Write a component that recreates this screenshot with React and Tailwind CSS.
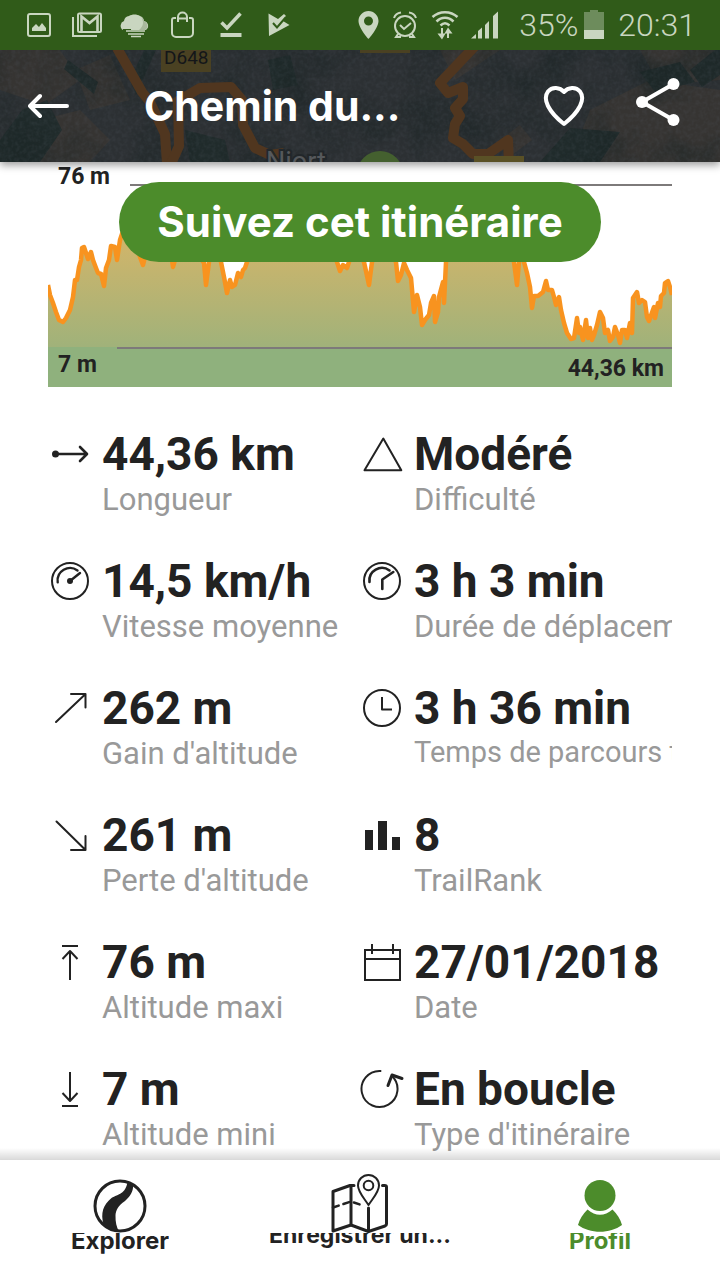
import React from 'react';

const profile = [
  [0, 123], [2, 133], [5, 141], [8, 150], [11, 158], [15, 160], [18, 156], [22, 148], [25, 135], [27, 118],
  [29, 118], [31, 105], [33, 98], [34, 86], [36, 85], [38, 91], [40, 97], [43, 90], [45, 98], [48, 106],
  [50, 111], [53, 112], [56, 124], [58, 106], [61, 98], [63, 84], [67, 85], [69, 98], [72, 78], [78, 60],
  [86, 72], [92, 95], [95, 103], [97, 95], [105, 78], [116, 74], [124, 98], [125, 105], [127, 98], [139, 78],
  [156, 101], [158, 123], [161, 100], [165, 81], [173, 100], [176, 115], [179, 131], [182, 118], [184, 125],
  [187, 123], [190, 111], [193, 115], [195, 108], [197, 106], [199, 100], [202, 81], [220, 50], [245, 62],
  [262, 45], [280, 75], [289, 100], [292, 109], [295, 103], [299, 106], [301, 100], [305, 85], [316, 100],
  [321, 123], [324, 100], [335, 78], [348, 100], [350, 119], [353, 113], [356, 101], [359, 108], [363, 116],
  [366, 150], [369, 133], [372, 145], [374, 163], [377, 158], [381, 153], [383, 141], [386, 134], [387, 160],
  [390, 150], [391, 135], [395, 120], [396, 141], [398, 100], [402, 78], [420, 40], [445, 55], [466, 100],
  [469, 123], [471, 100], [474, 88], [476, 100], [479, 111], [482, 125], [484, 146], [486, 134], [490, 134],
  [495, 130], [498, 119], [500, 128], [504, 128], [506, 135], [508, 143], [511, 135], [513, 148], [516, 161],
  [519, 171], [523, 177], [526, 176], [529, 156], [531, 171], [532, 165], [535, 178], [538, 158], [540, 176],
  [542, 166], [544, 178], [546, 173], [549, 163], [552, 150], [555, 156], [557, 171], [560, 168], [562, 179],
  [565, 175], [567, 165], [570, 173], [572, 181], [574, 168], [577, 168], [579, 176], [582, 161], [584, 171],
  [585, 136], [589, 130], [591, 141], [594, 138], [597, 140], [599, 155], [601, 159], [606, 145], [607, 156],
  [610, 141], [612, 145], [613, 134], [616, 131], [617, 121], [620, 119], [622, 125], [624, 133],
];

const linePoints = profile.map((p) => p.join(',')).join(' ');

const icons = {
  length: (
    <>
      <circle cx="7.5" cy="22" r="3.5" fill="currentColor" stroke="none" />
      <path d="M8 22h30M32 15l7 7-7 7" strokeWidth="2.6" />
    </>
  ),
  difficulty: <path d="M23.3 6.5 4.5 38.3h36.8Z" />,
  speed: (
    <>
      <circle cx="22" cy="22" r="18" />
      <circle cx="22" cy="22" r="3" fill="currentColor" stroke="none" />
      <path d="M9.7 23.3A12.5 12.5 0 0 1 29.5 11.5M22 22l10-8" strokeWidth="2.4" />
    </>
  ),
  moving: (
    <>
      <circle cx="22" cy="22" r="18" />
      <path d="M9.5 23A12.5 12.5 0 0 1 29.5 11.5M22.3 30v-9.5l11-7.5" strokeWidth="2.6" />
    </>
  ),
  gain: <path d="M8 36 37 8.5M23 8h14.5v13.5" />,
  loss: <path d="M8.5 8.5 37 36.5M23 37h14.5V23" />,
  clock: (
    <>
      <circle cx="22" cy="22" r="18" />
      <path d="M22 11v12.5h10" strokeLinecap="butt" />
    </>
  ),
  rank: <path d="M5 17h8v20H5zM18 8h9v29h-9zM32 24h8v13h-8z" fill="currentColor" stroke="none" />,
  max: <path d="M14 6h16M22 40V11M14.5 19l7.5-8 7.5 8" strokeLinecap="butt" />,
  min: <path d="M14 39h16M22 5v29M14.5 26l7.5 8 7.5-8" strokeLinecap="butt" />,
  date: <path d="M5 10h35v30H5zM5 19h35M12 4v10M33 4v10" strokeLinejoin="miter" strokeLinecap="butt" />,
  loop: (
    <>
      <path d="M20.5 4A18 18 0 1 0 32 9" />
      <path d="M28 18.5 32 8l10 3.5" strokeWidth="3" />
    </>
  ),
};

const stats = [
  { icon: 'length', value: '44,36 km', label: 'Longueur' },
  { icon: 'difficulty', value: 'Modéré', label: 'Difficulté' },
  { icon: 'speed', value: '14,5 km/h', label: 'Vitesse moyenne' },
  { icon: 'moving', value: '3 h 3 min', label: 'Durée de déplacement' },
  { icon: 'gain', value: '262 m', label: "Gain d'altitude" },
  { icon: 'clock', value: '3 h 36 min', label: 'Temps de parcours total', small: true },
  { icon: 'loss', value: '261 m', label: "Perte d'altitude" },
  { icon: 'rank', value: '8', label: 'TrailRank' },
  { icon: 'max', value: '76 m', label: 'Altitude maxi' },
  { icon: 'date', value: '27/01/2018', label: 'Date' },
  { icon: 'min', value: '7 m', label: 'Altitude mini' },
  { icon: 'loop', value: 'En boucle', label: "Type d'itinéraire" },
];

const StatusBar = () => (
  <div className="relative z-20 flex h-[50px] items-center justify-between bg-[#305b19] pl-[15px] pr-6 text-[#c9d6c0]">
    <div className="flex">
      {/* gallery */}
      <svg className="h-[30px] w-12" viewBox="0 0 48 30" fill="none" stroke="currentColor" strokeWidth="2">
        <rect x="13" y="4" width="22" height="22" rx="2" />
        <path d="M17 21v-3l4-4 3 3 3-4 4 5v3z" fill="currentColor" stroke="none" />
      </svg>
      {/* mail */}
      <svg className="h-[30px] w-12" viewBox="0 0 48 30" fill="none" stroke="currentColor" strokeWidth="2">
        <path d="M10 7v19h24" />
        <rect x="15" y="3.5" width="23" height="18.5" rx="1.5" />
        <path d="M18.5 22V6.5l8 6.5 8-6.5V22" strokeWidth="2.6" />
      </svg>
      {/* weather */}
      <svg className="h-[30px] w-12" viewBox="0 0 48 30" fill="currentColor">
        <path d="M12 20a5 5 0 0 1 1-9 6 6 0 0 1 5-5c3-2 8-2 11 0a6 6 0 0 1 4 5 5 5 0 0 1 2 9z" />
        <path d="M30 7c3 4 3 9-2 13h6a5 5 0 0 0-1-9 6 6 0 0 0-3-4z" fill="#a9b89d" />
        <path d="M12 19.5h8M15 22.5h18" stroke="#305b19" strokeWidth="1" />
        <path d="M15 21h19M17 24h16M20 26.5h10" stroke="currentColor" strokeWidth="1.3" />
      </svg>
      {/* shopping bag */}
      <svg className="h-[30px] w-12" viewBox="0 0 48 30" fill="none" stroke="currentColor" strokeWidth="2">
        <path d="M17 8h-2a2 2 0 0 0-2 2v13a4 4 0 0 0 4 4h13a4 4 0 0 0 4-4V10a2 2 0 0 0-2-2h-2" />
        <path d="M19 12V7c0-6 9-6 9 0v5M19 8.5h9" />
      </svg>
      {/* download done */}
      <svg className="h-[30px] w-12" viewBox="0 0 48 30" fill="none" stroke="currentColor">
        <path d="m14.5 12.5 5.5 5.5L33.5 3.5" strokeWidth="3.5" />
        <path d="M13.5 25h21" strokeWidth="4" />
      </svg>
      {/* play store */}
      <svg className="h-[30px] w-12" viewBox="0 0 48 30">
        <path d="M13.5 3.5 23 9l6-5 2 2-3 5 6.5 4L14 26z" fill="currentColor" />
        <path d="m18 13 4 4.5L31 7" fill="none" stroke="#305b19" strokeWidth="2" />
      </svg>
    </div>
    <div className="flex items-center">
      {/* location */}
      <svg className="mr-3 h-[30px] w-[22px]" viewBox="0 0 22 30" fill="currentColor" fillRule="evenodd">
        <path d="M10.500 1C5 1 .5 5.500.5 11c0 7 10 18 10 18s10-11 10-18c0-5.500-4.500-10-10-10zm0 5.500a4.500 4.500 0 1 1 0 9 4.500 4.500 0 0 1 0-9z" />
      </svg>
      {/* alarm */}
      <svg className="mr-[13px] h-[30px] w-[26px]" viewBox="0 0 26 30" fill="none" stroke="currentColor" strokeWidth="2">
        <circle cx="13" cy="16" r="10" />
        <path d="m8 15 4 4 7-6M2 8c1-3 4-5 7-5.500M24 8c-1-3-4-5-7-5.500M6 24l-2 3h5M20 24l2 3h-5" />
      </svg>
      {/* wifi */}
      <svg className="mr-3 h-[30px] w-7" viewBox="0 0 28 30" fill="none" stroke="currentColor" strokeWidth="2.5">
        <path d="M1.5 7c7-6.5 18-6.5 25 0M5.5 11.5c5-5 12-5 17 0M9.5 15.5c3-3 6-3 9 0" />
        <path d="M11 18v7M17 28v-7" strokeWidth="2" />
        <path d="M6.5 23.5h8L11 29.5zM13.5 23.5h8L17 17.5z" fill="currentColor" stroke="none" />
      </svg>
      {/* signal */}
      <svg className="mr-5 h-[30px] w-7" viewBox="0 0 28 30" fill="currentColor">
        <path d="M0 28.5 5 24v4.5zM7 21l4-3.5v11H7zM14 15l4-4v17.5h-4zM22 6l5-4.5v27h-5z" />
      </svg>
      <span className="font-[Roboto,sans-serif] text-[32px] font-light leading-[50px]">35%</span>
      {/* battery */}
      <svg className="ml-[6px] mr-[14px] h-[30px] w-5" viewBox="0 0 20 30">
        <path d="M0 2h6V0h8v2h6v18H0z" fill="#6d8c5c" />
        <path d="M0 20h20v9H0z" fill="currentColor" />
      </svg>
      <span className="font-[Roboto,sans-serif] text-[32px] font-light leading-[50px]">20:31</span>
    </div>
  </div>
);

const MapBackdrop = () => (
  <svg
    className="absolute inset-0 h-full w-full"
    viewBox="0 0 720 112"
    preserveAspectRatio="xMidYMid slice"
    aria-hidden="true"
  >
    <defs>
      <filter id="grain" x="0" y="0" width="100%" height="100%" colorInterpolationFilters="sRGB">
        <feTurbulence type="fractalNoise" baseFrequency="0.25" numOctaves="3" seed="4" />
        <feColorMatrix values="0 0 0 0 .35  0 0 0 0 .38  0 0 0 0 .42  .9 0 0 0 -.33" />
      </filter>
      <filter id="patches" x="0" y="0" width="100%" height="100%" colorInterpolationFilters="sRGB">
        <feTurbulence type="fractalNoise" baseFrequency="0.022" numOctaves="3" seed="9" />
        <feColorMatrix values="0 0 0 0 .1  0 0 0 0 .14  0 0 0 0 .14  0 2.5 0 0 -1" />
      </filter>
    </defs>
    <rect width="720" height="112" fill="#2c3033" />
    <g fill="#363432">
      <path d="M0 0h60l20 30-35 25L0 40zM75 20l35-15 20 45-40 10zM20 75l60-15 30 30-20 22H30z" />
      <path d="M440 0h60l-45 30zM590 60l60-30 70 10v72H570zM640 0h80v30l-60 5zM500 90l20-15 12 15-20 15z" />
    </g>
    <g fill="#202b2b">
      <path d="m68 10 30 22-4 12-30-25zM22 60l25-10 15 30-22 32H0V90zM130 30l14-30h12l-20 45zM185 80l40 10 5 22h-40z" />
      <path d="m690 20 25-20h5v25l-18 12zM640 22l40-10 15 20-40 10zM570 78l50 4-20 30h-60zM268 10l22-5 8 30-25 5z" />
    </g>
    <rect width="720" height="112" filter="url(#patches)" opacity="0.5" />
    <rect width="720" height="112" filter="url(#grain)" opacity="0.4" />
    <g fill="none" stroke="#50361f" strokeWidth="10" strokeLinejoin="round">
      <path d="m117-2 25 44 8 10 15 32 2 30" />
      <path d="m171 114 8-18-1-45 22-13 31-1 11 13 1 25 12 23 15 7 14-2" />
      <path d="m475-4-35 37 8 10 15-6v12l-8 9 5 8-5 8-2 14 10 6 10 10h15l20-14 1 26" />
    </g>
    <rect x="161" width="50" height="22" fill="#4a4122" />
    <text x="164" y="14" fill="#141619" fontSize="19" fontFamily="Roboto, sans-serif">D648</text>
    <rect x="360" width="50" height="3" fill="#4a4122" />
    <rect x="474" y="106" width="50" height="7" fill="#5a5126" />
    <circle cx="380" cy="124" r="23" fill="#44602f" />
    <text
      x="266"
      y="121"
      fill="#55585b"
      stroke="#22272a"
      strokeWidth="4"
      paintOrder="stroke"
      fontSize="27"
      fontFamily="Roboto, sans-serif"
    >
      Niort
    </text>
  </svg>
);

const Header = () => (
  <header className="relative z-10 h-28 shadow-[0_3px_8px_rgba(0,0,0,0.4)]">
    <MapBackdrop />
    <div className="relative flex h-full items-center pl-7 pr-[39px] text-white">
      <button type="button" aria-label="Retour">
        <svg className="h-7 w-[42px]" viewBox="0 0 42 28" fill="none" stroke="currentColor" strokeWidth="4" strokeLinecap="round" strokeLinejoin="round">
          <path d="M39 14H2M12 4 2 14l10 10" />
        </svg>
      </button>
      <h1 className="ml-[74px] min-w-0 flex-1 truncate font-[Inter,sans-serif] text-[41px] font-bold leading-[56px]">
        Chemin du...
      </h1>
      <button type="button" aria-label="Ajouter aux favoris">
        <svg className="h-[42px] w-[42px]" viewBox="0 0 42 42" fill="none" stroke="currentColor" strokeWidth="4" strokeLinejoin="round">
          <path d="M21 7C17 2 9 1.500 5 6.500c-3 4-2.500 9.500 0 14.500 3.500 7 9 12.500 16 18 7-5.500 12.500-11 16-18 2.500-5 3-10.500 0-14.500C33 1.500 25 2 21 7z" />
        </svg>
      </button>
      <button type="button" aria-label="Partager" className="ml-[50px]">
        <svg className="h-[58px] w-[46px]" viewBox="0 0 46 58" fill="currentColor" stroke="currentColor">
          <path d="M38.5 7 7 25l31.5 18" fill="none" strokeWidth="4" />
          <circle cx="38.5" cy="7" r="6" stroke="none" />
          <circle cx="7" cy="25" r="6" stroke="none" />
          <circle cx="38.5" cy="43" r="6" stroke="none" />
        </svg>
      </button>
    </div>
  </header>
);

const ElevationChart = () => (
  <section className="relative px-12 font-[Roboto,sans-serif] text-[23px] font-bold leading-7 text-[#222]">
    <div className="relative">
      <svg className="block h-[225px] w-full" viewBox="0 0 624 225" preserveAspectRatio="none" aria-hidden="true">
        <defs>
          <linearGradient id="slope" gradientUnits="userSpaceOnUse" x1="0" y1="70" x2="0" y2="185">
            <stop offset="0" stopColor="#d4b569" />
            <stop offset="1" stopColor="#a0b27a" />
          </linearGradient>
        </defs>
        <polygon points={`0,185 ${linePoints} 624,185`} fill="url(#slope)" />
        <rect y="185" width="624" height="40" fill="#8fb17d" />
        <path d="M82 23h542M69 186h555" stroke="#7d7a7a" strokeWidth="2" />
        <polyline points={linePoints} fill="none" stroke="#f8931f" strokeWidth="4.5" strokeLinejoin="round" />
      </svg>
      <span className="absolute left-[10px] top-px">76 m</span>
      <span className="absolute bottom-2 left-[10px]">7 m</span>
      <span className="absolute bottom-1 right-2">44,36 km</span>
    </div>
    <div className="absolute inset-x-0 top-5 flex justify-center">
      <button
        type="button"
        className="h-20 rounded-full bg-[#4c8c2b] px-[38px] font-[Inter,sans-serif] text-[42px] font-bold text-white"
      >
        Suivez cet itinéraire
      </button>
    </div>
  </section>
);

const Stat = ({ icon, value, label, small }) => (
  <div className="flex min-w-0 gap-[10px]">
    <svg
      className="mt-[6px] h-11 w-11 shrink-0"
      viewBox="0 0 44 44"
      fill="none"
      stroke="currentColor"
      strokeWidth="2"
      strokeLinecap="round"
      strokeLinejoin="round"
      aria-hidden="true"
    >
      {icons[icon]}
    </svg>
    <div className="flex min-w-0 flex-1 flex-col-reverse justify-end overflow-hidden whitespace-nowrap">
      <dt className={small ? 'h-9 text-[29px] leading-8 text-[#999]' : 'text-[31px] leading-9 text-[#999]'}>
        {label}
      </dt>
      <dd className="text-[46px] font-bold leading-[56px]">{value}</dd>
    </div>
  </div>
);

const TabBar = () => (
  <nav className="sticky bottom-0 z-10 grid h-[120px] grid-cols-3 bg-white font-[Inter,sans-serif] text-2xl font-bold text-[#222]">
    <div className="pointer-events-none absolute inset-x-0 bottom-full h-3 bg-gradient-to-t from-black/15 to-transparent" />
    <a href="#explorer" className="flex flex-col items-center pt-[19px]">
      <svg className="h-[54px] w-[54px] shrink-0" viewBox="0 0 54 54">
        <circle cx="27" cy="27" r="25" fill="none" stroke="currentColor" strokeWidth="3" />
        <path
          d="M34.500 3 40 6.500c.5 6-3 11-8 15.500-7 5-9 9-9.500 14-.2 7 1 12 3.500 16.500-6-.5-12-3-15.500-7C7.500 34 10 26 18.500 19c7-4 14-4 16-16z"
          fill="currentColor"
        />
      </svg>
      <span className="h-7 overflow-hidden leading-4">Explorer</span>
    </a>
    <a href="#record" className="flex flex-col items-center pt-[14px]">
      <svg
        className="h-[59px] w-[58px] shrink-0"
        viewBox="0 0 58 59"
        fill="none"
        stroke="currentColor"
        strokeWidth="3"
        strokeLinecap="round"
        strokeLinejoin="round"
      >
        <path d="M23 11.500h-4L2 17.500v39.500l18-6 17.500 6.500L54 52c1-.5 1.500-1 1.500-2V13c0-1-1-1.500-2-1.500h-2" />
        <path d="M20 12v39M37.5 34v23" />
        <path d="M2 33.5 20 27.5l9 3" strokeDasharray="6 5" strokeWidth="2.5" />
        <path d="M37.500 31C33 24 27 18 27 11.500a10.500 10.500 0 0 1 21 0C48 18 42 24 37.500 31z" strokeWidth="2" />
        <circle cx="37.5" cy="11.5" r="4.8" strokeWidth="2" />
      </svg>
      <span className="h-7 overflow-hidden whitespace-nowrap text-[23px] leading-1">Enregistrer un...</span>
    </a>
    <a href="#profil" className="flex flex-col items-center pt-5 text-[#4c8c2b]">
      <svg className="h-[53px] w-[54px] shrink-0" viewBox="0 0 54 53" fill="currentColor">
        <circle cx="27" cy="15.5" r="15.5" />
        <path d="M14.500 29.500c8 7 17 7 25 0 4.500 4.500 8 9.500 9.500 15.500-12 9-32 9-44 0 1.500-6 5-11 9.500-15.500z" />
      </svg>
      <span className="h-7 overflow-hidden leading-4">Profil</span>
    </a>
  </nav>
);

const App = () => {
  return (
    <div className="flex min-h-screen flex-col bg-white">
      <StatusBar />
      <Header />
      <main className="flex-1">
        <ElevationChart />
        <dl className="mt-[39px] grid grid-cols-2 gap-y-[35px] px-12 font-[Roboto,sans-serif] text-[#222]">
          {stats.map((stat) => (
            <Stat key={stat.label} {...stat} />
          ))}
        </dl>
      </main>
      <TabBar />
    </div>
  );
};

export default App;
